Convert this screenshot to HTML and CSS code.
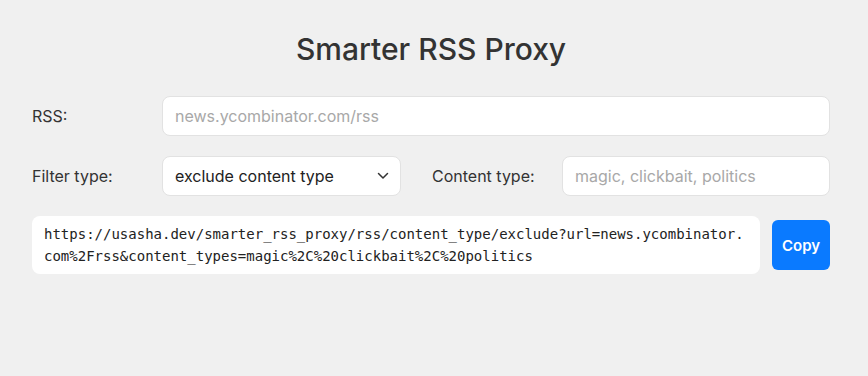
FILE: index.html
```html
<!DOCTYPE html>
<html>
    <head>
        <title>Smarter RSS Proxy</title>
        <link rel="stylesheet" href="styles.css">
    </head>
    <body>
        <div class="page">
            <h1 class="title">Smarter RSS Proxy</h1>

            <div class="row">
                <label class="label" for="rss">RSS:</label>
                <input class="field grow" id="rss" type="text" placeholder="news.ycombinator.com/rss">
            </div>

            <div class="row">
                <label class="label" for="filter">Filter type:</label>
                <div class="select-wrap">
                    <select class="field select" id="filter">
                        <option>exclude content type</option>
                        <option>include content type</option>
                    </select>
                    <svg class="chevron" width="12" height="8" viewBox="0 0 12 8">
                        <path d="M1.5 1.5 L6 6 L10.5 1.5" fill="none" stroke="#333" stroke-width="1.5" stroke-linecap="round" stroke-linejoin="round"/>
                    </svg>
                </div>
                <label class="label label-second" for="types">Content type:</label>
                <input class="field grow" id="types" type="text" placeholder="magic, clickbait, politics">
            </div>

            <div class="row">
                <div class="result">https://usasha.dev/smarter_rss_proxy/rss/content_type/exclude?url=news.ycombinator.<wbr>com%2Frss&amp;content_types=magic%2C%20clickbait%2C%20politics</div>
                <button class="copy">Copy</button>
            </div>
        </div>
    </body>
</html>
```

FILE: styles.css
```css
body{
    margin: 0;
    background-color: #f0f0f0;
    font-family: Inter, "Noto Sans", sans-serif;
    color: #333;
}

.page{
    padding: 0 38px 0 32px;
}

.title{
    margin: 0;
    padding: 29px 0 27px;
    text-align: center;
    font-size: 30px;
    font-weight: 500;
    line-height: 40px;
    color: #333;
}

.row{
    display: flex;
    align-items: center;
    margin-bottom: 20px;
}

.label{
    width: 130px;
    flex-shrink: 0;
    font-size: 16px;
    color: #333;
}

.label-second{
    margin-left: 31px;
}

.field{
    box-sizing: border-box;
    height: 40px;
    padding: 0 12px;
    border: 1px solid #e2e2e2;
    border-radius: 8px;
    background-color: white;
    font-family: Inter, "Noto Sans", sans-serif;
    font-size: 16px;
    color: #222;
    outline: none;
}

.field::placeholder{
    color: #a8a8a8;
}

.grow{
    flex: 1;
    min-width: 0;
}

.select-wrap{
    position: relative;
    width: 239px;
}

.select{
    width: 100%;
    appearance: none;
    -webkit-appearance: none;
}

.chevron{
    position: absolute;
    right: 12px;
    top: 16px;
    pointer-events: none;
}

.result{
    flex: 1;
    min-width: 0;
    box-sizing: border-box;
    padding: 7px 12px;
    border-radius: 8px;
    background-color: white;
    font-family: "DejaVu Sans Mono", monospace;
    font-size: 14px;
    line-height: 22px;
    color: #222;
    overflow-wrap: anywhere;
}

.copy{
    margin-left: 12px;
    width: 58px;
    height: 50px;
    border: none;
    border-radius: 6px;
    background-color: #0a7aff;
    color: white;
    font-family: Inter, "Noto Sans", sans-serif;
    font-size: 15px;
    font-weight: 600;
}
```
